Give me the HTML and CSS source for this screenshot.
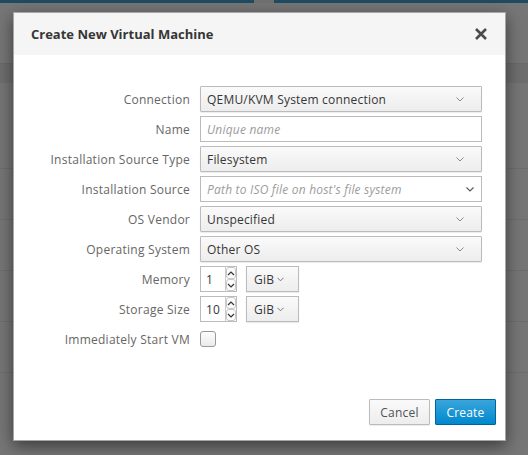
FILE: index.html
```html
<!DOCTYPE html>
<html>
<head>
<meta charset="utf-8">
<link rel="stylesheet" href="styles.css">
</head>
<body>
<div class="page">
  <div class="topbar"><div class="seg"></div><div class="gap"></div><div class="seg"></div></div>
  <div class="spacer1"></div>
  <div class="band"></div>
  <div class="row r1"></div>
  <div class="row"></div>
  <div class="row"></div>
  <div class="row"></div>
  <div class="row"></div>
</div>

<div class="modal">
  <div class="modal-header">
    <h4 class="modal-title">Create New Virtual Machine</h4>
    <button class="close" aria-label="Close">
      <svg width="14" height="14" viewBox="0 0 14 14"><path d="M2 2 L12 12 M12 2 L2 12" stroke="#4a4a4a" stroke-width="2.6" stroke-linecap="butt"/></svg>
    </button>
  </div>
  <div class="modal-body">
    <div class="form">
      <label class="lbl">Connection</label>
      <div class="select"><span>QEMU/KVM System connection</span><svg class="caret" width="8" height="5" viewBox="0 0 8 5"><path d="M0.5 0.5 L4 4 L7.5 0.5" fill="none" stroke="#8a8a8a" stroke-width="1"/></svg></div>

      <label class="lbl">Name</label>
      <div class="input placeholder">Unique name</div>

      <label class="lbl">Installation Source Type</label>
      <div class="select"><span>Filesystem</span><svg class="caret" width="8" height="5" viewBox="0 0 8 5"><path d="M0.5 0.5 L4 4 L7.5 0.5" fill="none" stroke="#8a8a8a" stroke-width="1"/></svg></div>

      <label class="lbl">Installation Source</label>
      <div class="input placeholder combo"><span>Path to ISO file on host's file system</span><svg class="caret dark" width="8" height="5" viewBox="0 0 8 5"><path d="M0.5 0.5 L4 4 L7.5 0.5" fill="none" stroke="#555" stroke-width="1.1"/></svg></div>

      <label class="lbl">OS Vendor</label>
      <div class="select"><span>Unspecified</span><svg class="caret" width="8" height="5" viewBox="0 0 8 5"><path d="M0.5 0.5 L4 4 L7.5 0.5" fill="none" stroke="#8a8a8a" stroke-width="1"/></svg></div>

      <label class="lbl">Operating System</label>
      <div class="select"><span>Other OS</span><svg class="caret" width="8" height="5" viewBox="0 0 8 5"><path d="M0.5 0.5 L4 4 L7.5 0.5" fill="none" stroke="#8a8a8a" stroke-width="1"/></svg></div>

      <label class="lbl">Memory</label>
      <div class="size">
        <div class="num"><span class="val">1</span>
          <div class="spin">
            <span class="sb"><svg width="8" height="5" viewBox="0 0 8 5"><path d="M1 4 L4 1 L7 4" fill="none" stroke="#333" stroke-width="1.2"/></svg></span>
            <span class="sb"><svg width="8" height="5" viewBox="0 0 8 5"><path d="M1 1 L4 4 L7 1" fill="none" stroke="#333" stroke-width="1.2"/></svg></span>
          </div>
        </div>
        <div class="unit"><span>GiB</span><svg width="7" height="5" viewBox="0 0 7 5"><path d="M0.5 0.8 L3.5 3.8 L6.5 0.8" fill="none" stroke="#777" stroke-width="1"/></svg></div>
      </div>

      <label class="lbl">Storage Size</label>
      <div class="size">
        <div class="num"><span class="val">10</span>
          <div class="spin">
            <span class="sb"><svg width="8" height="5" viewBox="0 0 8 5"><path d="M1 4 L4 1 L7 4" fill="none" stroke="#333" stroke-width="1.2"/></svg></span>
            <span class="sb"><svg width="8" height="5" viewBox="0 0 8 5"><path d="M1 1 L4 4 L7 1" fill="none" stroke="#333" stroke-width="1.2"/></svg></span>
          </div>
        </div>
        <div class="unit"><span>GiB</span><svg width="7" height="5" viewBox="0 0 7 5"><path d="M0.5 0.8 L3.5 3.8 L6.5 0.8" fill="none" stroke="#777" stroke-width="1"/></svg></div>
      </div>

      <label class="lbl">Immediately Start VM</label>
      <div class="checkwrap"><span class="check"></span></div>
    </div>
  </div>
  <div class="modal-footer">
    <button class="btn btn-default">Cancel</button>
    <button class="btn btn-primary">Create</button>
  </div>
</div>
</body>
</html>
```

FILE: styles.css
```css
* { box-sizing: border-box; }
html, body { margin: 0; padding: 0; }
body {
  width: 528px;
  height: 455px;
  overflow: hidden;
  background: #767676;
  font-family: "Open Sans", "Liberation Sans", sans-serif;
  position: relative;
}
.page {
  display: flex;
  flex-direction: column;
  height: 455px;
}
.topbar { display: flex; height: 3px; }
.topbar .seg { flex: 1; background: #1f4b63; }
.topbar .gap { width: 20px; background: #707070; }
.spacer1 { height: 60px; }
.band { height: 20px; background: #6e6e6e; border-top: 1px solid #6a6a6a; }
.row { height: 51px; border-bottom: 1px solid #6d6d6d; }
.row.r1 { height: 86px; }

.modal {
  position: absolute;
  left: 13px;
  top: 12px;
  width: 493px;
  height: 429px;
  background: #fff;
  border: 1px solid rgba(0,0,0,0.35);
  box-shadow: 0 5px 15px rgba(0,0,0,0.5);
  display: flex;
  flex-direction: column;
}
.modal-header {
  height: 42px;
  background: #f5f5f5;
  display: flex;
  align-items: center;
  justify-content: space-between;
  padding: 0 17px 0 17px;
}
.modal-title {
  margin: 0;
  font-size: 13px;
  font-weight: 700;
  color: #363636;
}
.close {
  border: 0;
  background: transparent;
  padding: 0;
  width: 14px;
  height: 14px;
  display: flex;
}
.modal-body {
  flex: 1;
  padding: 31px 24px 0 0;
}
.form {
  display: grid;
  grid-template-columns: 176px 282px;
  column-gap: 10px;
  row-gap: 4px;
  grid-auto-rows: 26px;
}
.lbl {
  font-size: 12px;
  letter-spacing: 0.25px;
  color: #666;
  text-align: right;
  align-self: center;
  white-space: nowrap;
}
.select {
  border: 1px solid #bbb;
  border-radius: 1px;
  background: linear-gradient(#fafafa, #ededed);
  box-shadow: 0 1px 1px rgba(3,3,3,0.08);
  display: flex;
  align-items: center;
  justify-content: space-between;
  padding: 0 17px 0 6px;
  font-size: 12px;
  letter-spacing: 0.2px;
  color: #363636;
}
.input {
  border: 1px solid #bbb;
  background: #fff;
  display: flex;
  align-items: center;
  padding: 0 6px;
  font-size: 12px;
  letter-spacing: 0.2px;
  color: #363636;
}
.placeholder { font-style: italic; color: #9c9c9c; }
.combo { justify-content: space-between; padding-right: 7px; }
.size { display: flex; gap: 9px; }
.num {
  width: 37px;
  display: flex;
  align-items: stretch;
}
.num .val {
  width: 25px;
  border: 1px solid #bbb;
  border-right: 0;
  font-size: 12px;
  letter-spacing: 0.2px;
  color: #363636;
  display: flex;
  align-items: center;
  padding-left: 5px;
}
.spin {
  width: 12px;
  display: flex;
  flex-direction: column;
  border: 1px solid #bbb;
  border-left: 1px solid #ccc;
}
.sb {
  flex: 1;
  display: flex;
  align-items: center;
  justify-content: center;
  border: 1px solid #c8c8c8;
  border-radius: 3px;
  background: #fbfbfb;
  margin: 0;
}
.unit {
  width: 53px;
  border: 1px solid #bbb;
  background: linear-gradient(#fafafa, #ededed);
  box-shadow: 0 1px 1px rgba(3,3,3,0.08);
  display: flex;
  align-items: center;
  gap: 3px;
  padding-left: 7px;
  font-size: 12px;
  letter-spacing: 0.2px;
  color: #363636;
}
.checkwrap { display: flex; align-items: center; }
.check {
  width: 16px;
  height: 16px;
  border: 1px solid #999;
  border-radius: 3px;
  background: linear-gradient(#fdfdfd, #ebebeb);
}
.modal-footer {
  display: flex;
  justify-content: flex-end;
  gap: 5px;
  padding: 0 9px 15px 0;
}
.btn {
  height: 26px;
  font-family: "Open Sans", "Liberation Sans", sans-serif;
  font-size: 12px;
  letter-spacing: 0.2px;
  border-radius: 1px;
  padding: 0;
  width: 61px;
}
.btn-default {
  background: linear-gradient(#fafafa, #ededed);
  border: 1px solid #bbb;
  color: #4d5258;
  box-shadow: 0 1px 1px rgba(3,3,3,0.08);
}
.btn-primary {
  background: linear-gradient(#39a5dc, #0088ce);
  border: 1px solid #00659c;
  color: #fff;
}
```
